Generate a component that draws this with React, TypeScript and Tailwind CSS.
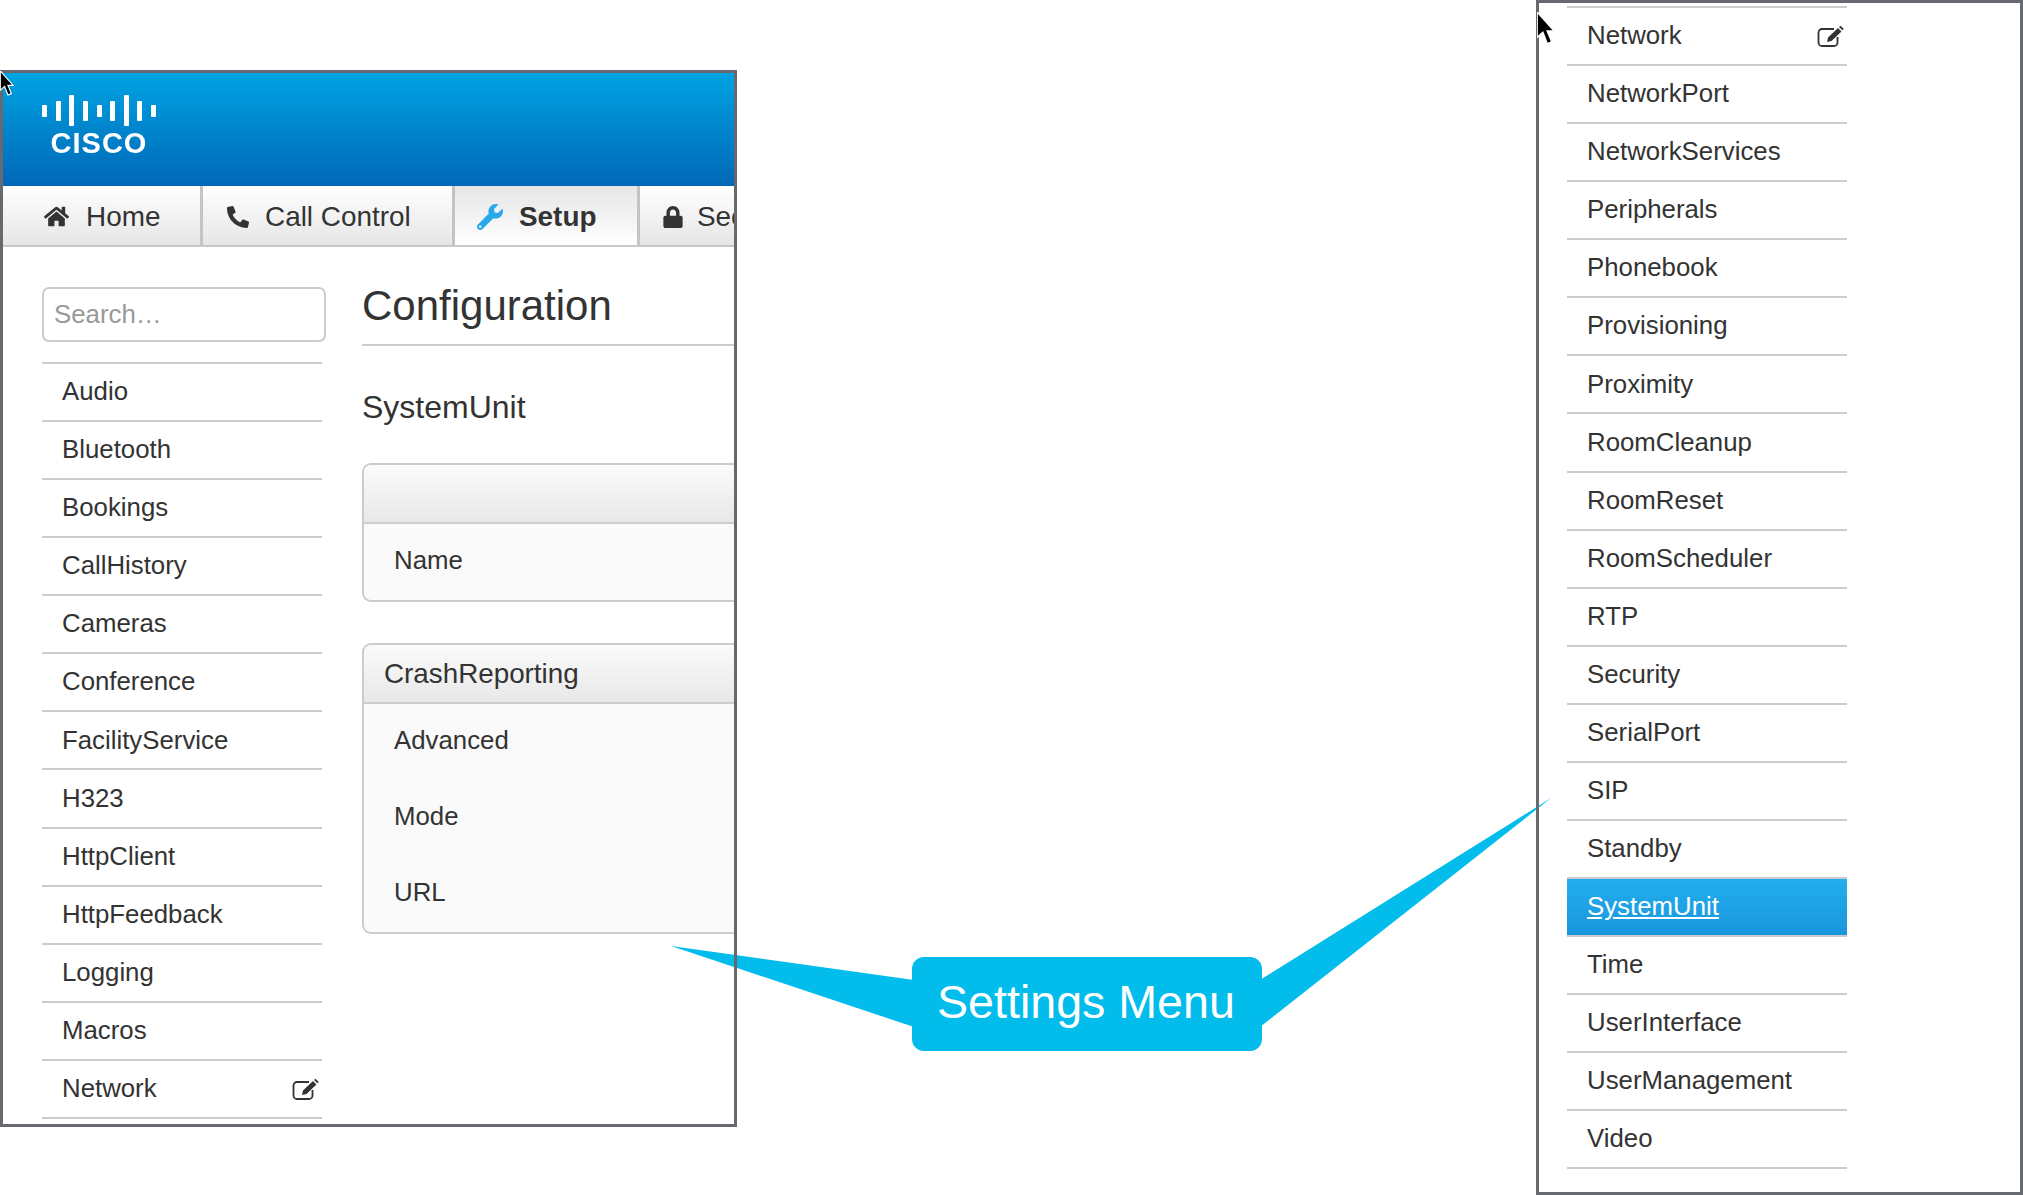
// Cisco web interface: Setup > Configuration, with the settings menu callout.
import { FaHome, FaLock, FaPhoneAlt, FaWrench } from 'react-icons/fa';

const leftMenu = ['Audio', 'Bluetooth', 'Bookings', 'CallHistory', 'Cameras', 'Conference', 'FacilityService', 'H323', 'HttpClient', 'HttpFeedback', 'Logging', 'Macros', 'Network'];
const rightMenu = ['Network', 'NetworkPort', 'NetworkServices', 'Peripherals', 'Phonebook', 'Provisioning', 'Proximity', 'RoomCleanup', 'RoomReset', 'RoomScheduler', 'RTP', 'Security', 'SerialPort', 'SIP', 'Standby', 'SystemUnit', 'Time', 'UserInterface', 'UserManagement', 'Video'];

// tall/short pattern of the logo bars
const logoBars = ['h-[12px]', 'h-[20px]', 'h-[31px]', 'h-[20px]', 'h-[12px]', 'h-[20px]', 'h-[31px]', 'h-[20px]', 'h-[12px]'];

// thin rounded square + solid pencil, FontAwesome's regular edit is too wide for this
function EditIcon() {
  return (
    <svg viewBox="0 0 27 22" className="h-[22px] w-[27px] text-[#333]">
      <path d="M17 4H5a3.5 3.5 0 0 0-3.5 3.5v10A3.5 3.5 0 0 0 5 21h12a3.5 3.5 0 0 0 3.5-3.5V12" fill="none" stroke="currentColor" strokeWidth="1.8" />
      <path d="M10 17 L11 12.5 L21 3 L24.5 6.5 L14.5 16 Z M22 2 L23.5 .7 L26.8 4 L25.5 5.3 Z" fill="currentColor" />
    </svg>
  );
}

function MenuRow({ label, active = false }: { label: string; active?: boolean }) {
  return (
    <li
      className={
        'flex h-[58.07px] items-center justify-between border-b-2 border-[#ccc] pr-[3px] pl-[20px] ' +
        (active ? 'bg-gradient-to-b from-[#22aeee] to-[#1a96dc] text-white underline' : 'text-[#333]')
      }
    >
      <span>{label}</span>
      {label === 'Network' && <EditIcon />}
    </li>
  );
}

function Tab({ label, icon, active = false, width }: { label: string; icon: React.ReactNode; active?: boolean; width: string }) {
  return (
    <div
      className={
        'flex shrink-0 items-center border-r-[3px] border-[#c4c4c4] pt-[2px] ' + width + ' ' +
        (active ? 'bg-gradient-to-b from-[#e6e6e6] to-white font-bold' : 'bg-gradient-to-b from-white to-[#e6e6e6]')
      }
    >
      {icon}
      <span>{label}</span>
    </div>
  );
}

function Panel({ title, rows }: { title: string; rows: string[] }) {
  return (
    <div className="w-[600px] overflow-hidden rounded-[9px] border-2 border-[#ccc] bg-[#fafafa]">
      <div className="flex h-[59px] items-center border-b-2 border-[#ccc] bg-gradient-to-b from-[#fbfbfb] to-[#e8e8e8] pl-[20px] text-[27.8px] text-[#333]">
        {title}
      </div>
      {rows.map((r) => (
        <div key={r} className="flex h-[76px] items-center pb-[2px] pl-[30px] text-[#333]">
          {r}
        </div>
      ))}
    </div>
  );
}

function Cursor({ className }: { className: string }) {
  return (
    <svg viewBox="0 0 14 26" className={className}>
      <path d="M0 0 L0 20 L4.5 16 L8 25 L11.5 23.5 L8 15 L13.5 15 Z" fill="#000" stroke="#fff" strokeWidth="1.2" />
    </svg>
  );
}

export default function App() {
  return (
    <div className="relative flex h-[1195px] w-[2023px] items-start justify-between overflow-hidden bg-white font-['Liberation_Sans',Arial,sans-serif] text-[25.8px] leading-none">
      {/* Left window */}
      <div className="relative mt-[70px] h-[1057px] w-[737px] overflow-hidden p-[3px]">
        <div className="flex h-[113px] flex-col bg-gradient-to-b from-[#00a3e3] to-[#0068b7] pt-[22px] pl-[39px]">
          <div className="flex h-[31px] w-[114px] items-center justify-between blur-[0.6px]">
            {logoBars.map((h, i) => (
              <span key={i} className={'w-[5px] rounded-[1px] bg-white ' + h} />
            ))}
          </div>
          <div className="mt-[3px] w-[114px] text-center text-[29px] font-bold tracking-[1px] text-white blur-[0.6px]">CISCO</div>
        </div>

        <div className="flex h-[61px] w-[900px] border-b-2 border-[#c8c8c8] text-[27.9px] text-[#333]">
          <Tab width="w-[200px]" label="Home" icon={<FaHome size={25} className="mr-[17px] ml-[41px] shrink-0" />} />
          <Tab width="w-[252px]" label="Call Control" icon={<FaPhoneAlt size={22} className="mr-[16px] ml-[24px] shrink-0" />} />
          <Tab width="w-[185px]" active label="Setup" icon={<FaWrench size={26} className="mr-[16px] ml-[22px] shrink-0 text-[#29a8ec]" />} />
          <Tab width="w-[220px]" label="Security" icon={<FaLock size={22} className="mr-[13px] ml-[22px] shrink-0" />} />
        </div>

        <div className="flex pt-[40px] pl-[39px]">
          <div className="w-[284px] shrink-0">
            <input
              placeholder="Search…"
              className="h-[55px] w-[284px] rounded-[7px] border-2 border-[#ccc] bg-white pl-[10px] text-[25.8px] outline-none placeholder:text-[#999]"
            />
            <ul className="mt-[20px] w-[280px] border-t-2 border-[#ccc]">
              {leftMenu.map((m) => (
                <MenuRow key={m} label={m} />
              ))}
            </ul>
          </div>

          <div className="ml-[36px] shrink-0">
            <h1 className="flex h-[59px] w-[600px] items-start border-b-2 border-[#ccc] text-[42px] leading-[38px] text-[#333]">Configuration</h1>
            <h2 className="mt-[45px] mb-[39px] h-[33px] text-[32px] leading-[33px] text-[#333]">SystemUnit</h2>
            <div className="flex flex-col gap-[41px]">
              <Panel title="" rows={['Name']} />
              <Panel title="CrashReporting" rows={['Advanced', 'Mode', 'URL']} />
            </div>
          </div>
        </div>

        <Cursor className="absolute top-[1px] left-0 z-30 h-[25px] w-[14px]" />
        {/* frame sits above the callout tail */}
        <div className="pointer-events-none absolute inset-0 z-20 border-[3px] border-[#666a70]" />
      </div>

      {/* Right window */}
      <div className="relative h-[1195px] w-[487px] pt-[6px] pl-[31px]">
        <ul className="w-[280px] border-t-2 border-[#ccc]">
          {rightMenu.map((m) => (
            <MenuRow key={m} label={m} active={m === 'SystemUnit'} />
          ))}
        </ul>
        <Cursor className="absolute top-[12px] left-[1px] z-30 h-[33px] w-[18px]" />
        <div className="pointer-events-none absolute inset-0 z-20 border-[3px] border-[#666a70]" />
      </div>

      {/* Callout */}
      <svg viewBox="0 0 2023 1195" className="pointer-events-none absolute inset-0 z-10 h-[1195px] w-[2023px]">
        <polygon points="671,946 914,980 914,1027" fill="#02bdec" />
        <polygon points="1551,798 1260,980 1260,1027" fill="#02bdec" />
      </svg>
      <div className="absolute top-[957px] left-[912px] z-10 flex h-[94px] w-[350px] items-center rounded-[12px] bg-[#02bdec] pb-[4px] pl-[25px] text-[46.6px] text-white">
        Settings Menu
      </div>
    </div>
  );
}
